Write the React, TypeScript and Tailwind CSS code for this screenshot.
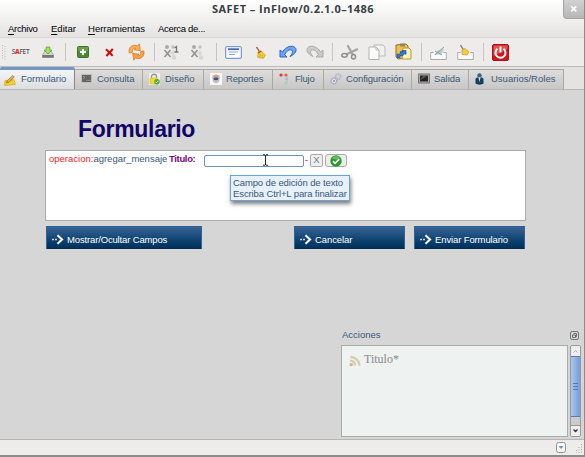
import React from "react";

type Kids = { children?: React.ReactNode };

function Svg({ w, h, box, children }: Kids & { w: number; h: number; box?: string }) {
  return (
    <svg width={w} height={h} viewBox={box ?? `0 0 ${w} ${h}`} className="block shrink-0" fill="none">
      {children}
    </svg>
  );
}

const Slot = ({ children }: Kids) => <div className="flex h-[29px] w-[27px] shrink-0 items-center justify-center">{children}</div>;
const Sep = () => (
  <div className="flex w-2 shrink-0 justify-center">
    <div className="h-[18px] w-px bg-[#c6c4c1]" />
  </div>
);

const Download = () => (
  <Svg w={12} h={12}>
    <path d="M2.5 5.5h7L11.5 9v2.5H.5V9z" fill="#d5d5d5" stroke="#909090" strokeWidth=".7" />
    <path d="M.5 9h11v2.5H.5z" fill="#777" />
    <path d="M4.2 1h3.6v3h2L6 8 2.2 4h2z" fill="#a5e45f" stroke="#52a329" strokeWidth=".8" />
  </Svg>
);
const Plus = () => (
  <Svg w={12} h={12}>
    <rect x=".5" y=".5" width="11" height="11" rx="1" fill="#4e8a36" stroke="#3d742c" />
    <path d="M1 1h10v4H1z" fill="#6b9e46" />
    <path d="M6 3v6M3 6h6" stroke="white" strokeWidth="2" />
  </Svg>
);
const Cross = () => (
  <Svg w={9} h={9}>
    <path d="M1 1.2l6.7 6.5M7.8 1L1.4 8" stroke="#d00a0a" strokeWidth="2" />
  </Svg>
);
const Refresh = () => (
  <Svg w={17} h={18}>
    <path d="M1.2 10C0 4 4.7 .8 9.7 3L11.2.8l1.2 6.9-6.4-1L8 5.4C5.3 4.5 3.8 6.4 4.5 9.2z" fill="#ffad58" stroke="#d97824" strokeWidth=".8" />
    <path d="M15.8 7.8c1.3 6-3.6 9.3-8.4 7.1L5.8 17.2l-1.2-6.9 6.4 1-2 1.3c2.7.9 4.2-1 3.5-3.8z" fill="#ffa046" stroke="#d97824" strokeWidth=".8" />
  </Svg>
);
const Node = ({ one }: { one?: boolean }) => (
  <Svg w={17} h={17}>
    <circle cx="4" cy="3" r="2" fill="#aaa" />
    <circle cx="10" cy="3" r="1.7" fill="#c1c1c1" />
    <path d="M1.5 6l6 7M7.5 6l-6 7" stroke="#929292" strokeWidth="1.6" />
    <path d="M10 6v6M7 9h5" stroke="#cecece" strokeWidth="1" />
    <circle cx="11" cy="13.5" r="2.3" fill="#d8d8d8" />
    {one && <path d="M11.5 4L13.5 2.5V8M11.5 8h4" stroke="#777" strokeWidth="1.3" />}
  </Svg>
);
const Lines = () => (
  <Svg w={17} h={13}>
    <rect x=".5" y=".5" width="16" height="12" rx="1.5" fill="#dce8f8" stroke="#7c9bca" />
    <rect x="2.5" y="2" width="12" height="9" fill="white" />
    <path d="M3 3.2h11" stroke="#416ba9" strokeWidth="1.8" />
    <path d="M4 6h9M4 8.5h6" stroke="#8ba7d0" />
  </Svg>
);
const Broom = () => (
  <Svg w={11} h={13}>
    <path d="M1.5.8l3 5" stroke="#b3643d" strokeWidth="1.4" />
    <path d="M3 6.5L6 5l4.5 4-2 3.3-5.8-.8z" fill="#f5cf38" stroke="#c69b20" strokeWidth=".7" />
    <path d="M3 7l3.3-2" stroke="#bc3d23" strokeWidth="1.2" />
    <path d="M5.5 8l-.8 3M7.5 8.5L7 12" stroke="#bf941d" strokeWidth=".6" />
  </Svg>
);
const Undo = ({ redo }: { redo?: boolean }) => (
  <Svg w={18} h={14}>
    <g transform={redo ? "translate(18 0) scale(-1 1)" : undefined}>
      <path d="M1 5v7h7L5.7 9.5C8 5 11.5 4 13 5.5s-.5 4-2 6C16.5 9 18.5 5 16 2.5S7 1 3.5 7z" fill={redo ? "#cacaca" : "#6da4f4"} stroke={redo ? "#ababab" : "#2e63c4"} />
    </g>
  </Svg>
);
const Scissors = () => (
  <Svg w={18} h={16}>
    <path d="M6.5 1.2L12 11M17 5L5 10.5" stroke="#a2a2a2" strokeWidth="2.1" />
    <ellipse cx="3.5" cy="11.3" rx="2.7" ry="1.9" stroke="#8f8f8f" strokeWidth="1.5" />
    <ellipse cx="12.5" cy="12.7" rx="2" ry="2.3" stroke="#8f8f8f" strokeWidth="1.5" />
  </Svg>
);
const Copy = () => (
  <Svg w={18} h={17}>
    <path d="M6 1h9l2 2v9H6z" fill="#f1f1f1" stroke="#bababa" />
    <path d="M1 3h7l3 3v9.5H1z" fill="#fafafa" stroke="#b1b1b1" />
    <path d="M8 3v3h3" stroke="#bbb" />
  </Svg>
);
const Paste = () => (
  <Svg w={17} h={18}>
    <path d="M1 2l10-1 2 2v12l-10 1-2-2z" fill="#f0c04d" stroke="#8d6f28" />
    <path d="M5 .5h5v3H5z" fill="#8f8468" />
    <path d="M8 5h6l2 2v9H7z" fill="#fff3bd" stroke="#b59448" />
    <path d="M2 14.5v-3.3h3.3V8.6h2.6L7 7.6h4v3.8l-1.2-1-2 2.3H5v1.8z" fill="#317cd7" stroke="#174c96" strokeWidth=".7" />
  </Svg>
);
const Tray = ({ broom }: { broom?: boolean }) => (
  <Svg w={17} h={17}>
    <path d="M.7 8.5V15.5h15.6V8.5h-3M.7 8.5h3" fill="#fafafa" stroke="#adadad" />
    {broom ? (
      <g>
        <path d="M3.5 1l3 5" stroke="#a66c44" strokeWidth="1.4" />
        <path d="M5 6l3-1.5 4 3.5-2 3-5-.5z" fill="#f4cc3d" stroke="#c7972b" strokeWidth=".7" />
      </g>
    ) : (
      <g>
        <path d="M4 10.5l4-4 6-2-2.5 6z" fill="#b9d0cd" />
        <path d="M5 11l9-8M5 7l7 4" stroke="#81a6a5" />
      </g>
    )}
  </Svg>
);
const Power = () => (
  <Svg w={17} h={17}>
    <rect x=".5" y=".5" width="16" height="16" rx="1.5" fill="#cb171f" stroke="#b60d16" />
    <path d="M1.5 1.5h14V5l-14 7z" fill="#e25252" />
    <path d="M5.5 4.8a5 5 0 1 0 6 0M8.5 2.5v6" stroke="white" strokeWidth="1.9" />
  </Svg>
);

const Pencil = () => (
  <Svg w={12} h={12}>
    <path d="M1 6.5l9-.8 1.3 4.8-10.7 1z" fill="#f6cf26" stroke="#d7aa22" strokeWidth=".7" />
    <path d="M3 7l5.8-5.5L10.3 3 4.5 8.5l-2 .3z" fill="#edb62e" stroke="#8b6c2b" strokeWidth=".7" />
  </Svg>
);
const Terminal = () => (
  <Svg w={11} h={11}>
    <path d="M.5 1.5h10v8H.5z" fill="#666" stroke="#bcbcbc" />
    <path d="M2 3l2 1.5L2 6" stroke="#a2a2a2" strokeWidth=".7" />
    <path d="M5 7.5h5" stroke="#898989" />
  </Svg>
);
const Lock = () => (
  <Svg w={11} h={12}>
    <path d="M0 0h11v12H0z" fill="#eeeeec" />
    <path d="M2.5 6V3.5c0-3 5-3 5 0V6" stroke="#999" strokeWidth="1.4" />
    <rect x="1" y="5" width="7.5" height="6" rx=".7" fill="#f3dc29" stroke="#d0b920" strokeWidth=".6" />
    <circle cx="8" cy="8.7" r="2.8" fill="#51a842" />
    <path d="M6.5 8.8l1 1 2-2" stroke="white" />
  </Svg>
);
const Report = () => (
  <Svg w={12} h={12}>
    <path d="M0 0h12v12H0z" fill="#f7f7f7" />
    <path d="M2 4l4-2 4 2-1 5-3 1.5L3 9z" fill="#c4bfca" />
    <path d="M2 3l4-1.5L10 3 6 5z" fill="#d3a568" />
    <ellipse cx="6" cy="5.8" rx="2.6" ry="1.5" fill="#44548a" />
  </Svg>
);
const Flow = () => (
  <Svg w={10} h={12}>
    <path d="M3 2h5v8" stroke="#bbb" />
    <circle cx="2" cy="2" r="1.6" fill="#ed3135" />
    <circle cx="7" cy="2" r="1.5" fill="#f15a34" />
    <circle cx="7.5" cy="6" r="1.3" fill="#a8b8db" />
    <circle cx="7" cy="10" r="1.6" fill="#9bdba3" />
  </Svg>
);
const Gears = () => (
  <Svg w={12} h={12}>
    <circle cx="8" cy="3.7" r="2.6" stroke="#b4b6cc" strokeWidth="2" strokeDasharray="1.4 .6" />
    <circle cx="4" cy="8" r="2.8" fill="#e8e8f2" stroke="#a7a9c3" strokeWidth="1.7" strokeDasharray="1.5 .5" />
    <circle cx="4" cy="8" r="1" fill="#888ba8" />
  </Svg>
);
const Screen = () => (
  <Svg w={12} h={11}>
    <rect x=".5" y="1" width="11" height="9" fill="#aaa" stroke="#777" />
    <rect x="2" y="2.5" width="8" height="6" fill="#252525" />
    <path d="M2 7l3-4h4z" fill="#5a5a5a" />
  </Svg>
);
const Person = () => (
  <Svg w={9} h={12}>
    <circle cx="4.5" cy="2.5" r="2.2" fill="#326488" />
    <path d="M.5 6c0-2.2 8-2.2 8 0v4.5C7 12 2 12 .5 10.5z" fill="#123f65" />
    <path d="M3.3 4.3h2.4L4.5 9z" fill="#d7e6f0" />
  </Svg>
);

function Tab({ icon, text, box, label }: { icon: React.ReactNode; text: string; box: string; label: string }) {
  return (
    <div className={`flex h-[20px] shrink-0 items-center border-t border-r border-[#aaa8a5] bg-linear-to-b from-[#dedddb] to-[#c9c7c5] ${box}`}>
      <div className="flex w-[22px] shrink-0 items-center pb-[2px] pl-[6px]">{icon}</div>
      <span className={`whitespace-nowrap pb-[2px] text-[9.5px] leading-[14px] ${label}`}>{text}</span>
    </div>
  );
}

function ActionButton({ children, size, text }: Kids & { size: string; text: string }) {
  return (
    <button className={`flex h-[23px] items-center rounded-[1px] border border-[#355f8c] border-b-[#002c54] bg-linear-to-b from-[#376497] via-[#124674] via-55% to-[#00315b] pl-[5px] text-white ${size}`}>
      <div className="pt-[3px]">
        <Svg w={12} h={11}>
          <path d="M0 5.5h2M3 5.5h2" stroke="#c9d4df" strokeWidth="1.5" />
          <path d="M5.5 1.2l4.6 4.3-4.6 4.3" stroke="#fffdf0" strokeWidth="2" />
        </Svg>
      </div>
      <span className={`ml-[3px] whitespace-nowrap pt-[4px] text-[9.5px] leading-[14px] ${text}`}>{children}</span>
    </button>
  );
}

export default function App() {
  return (
    <div className="flex h-[457px] w-[585px] flex-col overflow-hidden border-r border-b-2 border-[#8d8d8d] bg-[#d6d6d6] font-['Liberation_Sans',Arial,sans-serif] text-[#36597a]">
      <header className="relative h-[37px] shrink-0 bg-linear-to-b from-white to-[#e4e3e1] text-[#292929]">
        <h1 className="h-[21px] pt-[2px] pl-[212px] font-['Open_Sans','Noto_Sans',sans-serif] text-[11px] leading-[14px] font-bold tracking-[0.46px] text-[#384044]">SAFET – InFlow/0.2.1.0–1486</h1>
        <nav className="flex pl-[8px] text-[9.5px] leading-[16px] text-black">
          <span className="w-[43px] tracking-[-0.3px]"><u className="underline-offset-2">A</u>rchivo</span>
          <span className="w-[37px]"><u className="underline-offset-2">E</u>ditar</span>
          <span className="w-[70px]"><u className="underline-offset-2">H</u>erramientas</span>
          <span className="tracking-[-0.3px]">Acerca de...</span>
        </nav>
        <div className="absolute top-0 right-0 flex h-[19px] w-[21px] items-center justify-center rounded-bl-[4px] border-b border-l border-[#a4a4a4] bg-linear-to-b from-[#d1d1d1] to-[#b7b7b7]">
          <Svg w={8} h={8}><path d="M1.3 1.3l5 5M6.3 1.3l-5 5" stroke="white" strokeWidth="1.8" /></Svg>
        </div>
      </header>

      <div className="flex h-[30px] shrink-0 items-center border-t border-b border-t-[#dad8d6] border-b-[#bdbbb9] bg-[#edeceb]">
        <div className="flex w-[7px] shrink-0 pl-[2px]">
          <Svg w={4} h={15}><path d="M.5 0v15M3 1v14" stroke="#bbb" strokeDasharray="1 1.5" /></Svg>
        </div>
        <Slot><span className="font-['Open_Sans'] text-[6.5px] leading-[8px] font-semibold tracking-[-0.3px] text-[#555]">S<b className="text-[#dc3434]">A</b>FET</span></Slot>
        <Slot><Download /></Slot>
        <Sep />
        <Slot><Plus /></Slot>
        <Slot><Cross /></Slot>
        <Slot><Refresh /></Slot>
        <Sep />
        <Slot><Node one /></Slot>
        <Slot><Node /></Slot>
        <Sep />
        <Slot><Lines /></Slot>
        <Slot><Broom /></Slot>
        <Slot><Undo /></Slot>
        <Slot><Undo redo /></Slot>
        <Sep />
        <Slot><Scissors /></Slot>
        <Slot><Copy /></Slot>
        <Slot><Paste /></Slot>
        <Sep />
        <Slot><Tray /></Slot>
        <Slot><Tray broom /></Slot>
        <Sep />
        <Slot><Power /></Slot>
      </div>

      <div className="flex h-[22px] shrink-0 items-end bg-[#e4e3e1]">
        <div className="flex h-[22px] w-[75px] shrink-0 items-center rounded-t-[2px] border-t-[3px] border-r border-t-[#7697c6] border-r-[#888] bg-linear-to-b from-[#f2f5f9] to-[#dedede] pl-[4px]">
          <Pencil />
          <span className="ml-[5px] pb-[2px] text-[9.5px] leading-[14px]">Formulario</span>
        </div>
        <Tab icon={<Terminal />} text="Consulta" box="w-[68px]" label="" />
        <Tab icon={<Lock />} text="Diseño" box="w-[61px]" label="" />
        <Tab icon={<Report />} text="Reportes" box="w-[69px]" label="tracking-[-0.15px]" />
        <Tab icon={<Flow />} text="Flujo" box="w-[51px]" label="tracking-[-0.2px]" />
        <Tab icon={<Gears />} text="Configuración" box="w-[88px]" label="tracking-[-0.1px]" />
        <Tab icon={<Screen />} text="Salida" box="w-[57px]" label="" />
        <Tab icon={<Person />} text="Usuarios/Roles" box="w-[95px]" label="" />
      </div>

      <main className="flex min-h-0 flex-1 flex-col border-t border-[#b5b5b5]">
        <h2 className="mt-[25px] ml-[78px] text-[23px] leading-[28px] font-bold tracking-[-0.3px] text-[#110568]">Formulario</h2>
        <section className="mt-[7px] ml-[45px] h-[71px] w-[481px] shrink-0 border border-[#aaa] bg-white text-[9.5px]">
          <div className="flex h-[19px] items-center pl-[3px] whitespace-nowrap">
            <span className="w-[120px] pb-[3px]"><span className="text-[#f12424]">operacion:</span>agregar_mensaje</span>
            <b className="w-[35px] pb-[3px] tracking-[-0.35px] text-[#7b087b]">Titulo:</b>
            <div className="relative h-[12px] w-[100px] rounded-[2px] border border-[#6f8fbd] bg-white">
              <div className="absolute top-[-2px] left-[57px]">
                <Svg w={7} h={12}><path d="M1 .8h2l.5.7.5-.7h2M3.5 1v10M1 11.2h2l.5-.7.5.7h2" stroke="#222" /></Svg>
              </div>
              <div className="absolute top-[19px] left-[25px] h-[26px] w-[120px] border border-[#68a5d4] bg-[#e8f1fa] pt-[1px] pl-[2px] leading-[11px] shadow-[1px_3px_4px_rgba(0,0,0,0.5)]">
                <div className="tracking-[-0.12px]">Campo de edición de texto</div>
                <div className="tracking-[-0.1px]">Escriba Ctrl+L para finalizar</div>
              </div>
            </div>
            <span className="w-[6px] pl-[1px] text-red-600">-</span>
            <div className="flex h-[13px] w-[13px] items-center justify-center rounded-[2px] border border-[#aaa] bg-[#eee] text-[#6c8294]">X</div>
            <div className="ml-[2px] flex h-[13px] w-[22px] items-center justify-center rounded-[3px] border border-[#aaa] bg-[#eee]">
              <Svg w={12} h={12}><circle cx="6" cy="6" r="5.7" fill="#269c27" /><path d="M2 3.5C4-.2 8-.2 10 3.2 7 5 5 5 2 3.5z" fill="#65bf56" /><path d="M3 6.2l2.1 2.2 4.2-4.3" stroke="white" strokeWidth="1.7" /></Svg>
            </div>
          </div>
        </section>
        <div className="mt-[5px] flex pl-[46px]">
          <ActionButton size="w-[156px]" text="tracking-[-0.15px]">Mostrar/Ocultar Campos</ActionButton>
          <ActionButton size="ml-[92px] w-[111px]" text="tracking-[-0.1px]">Cancelar</ActionButton>
          <ActionButton size="ml-[9px] w-[111px]" text="tracking-[-0.12px]">Enviar Formulario</ActionButton>
        </div>
        <aside className="mt-[78px] ml-[341px] w-[242px]">
          <div className="flex h-[18px] items-start justify-between pr-[4px] pl-[1px]">
            <span className="text-[9.5px] leading-[16px]">Acciones</span>
            <div className="pt-[4px]">
              <Svg w={9} h={9}><rect x=".5" y=".5" width="8" height="8" rx="1.5" stroke="#777" /><path d="M3.5 2.5h3v3h-1M2.5 4h3v2.5h-3z" stroke="#555" strokeWidth=".8" /></Svg>
            </div>
          </div>
          <div className="flex">
            <div className="flex h-[92px] w-[227px] border border-[#aaa] bg-[#eef3f1] pt-[9px] pl-[7px]">
              <Svg w={12} h={12}><circle cx="2.2" cy="9.8" r="1.8" fill="#cebb8b" /><path d="M1 5.6c3 0 5 2 5 5M1.5 2c5 0 9 4 9 8.7" stroke="#d9ccaa" strokeWidth="2.3" /></Svg>
              <span className="mt-[-3px] ml-[3px] font-['Liberation_Serif',serif] text-[12px] leading-[15px] text-[#888]">Titulo*</span>
            </div>
            <div className="ml-[2px] flex h-[92px] w-[11px] flex-col overflow-hidden rounded-[2px] border border-[#999] bg-[#cbcbcb]">
              <div className="flex h-[10px] items-center justify-center bg-[#eee]"><Svg w={5} h={3}><path d="M.5 2.5l2-2 2 2" stroke="#aaa" /></Svg></div>
              <div className="flex h-[61px] items-center justify-center border-y border-[#547eb8] bg-linear-to-r from-[#abc8ed] to-[#719ed8]"><Svg w={5} h={7}><path d="M0 .5h5M0 3.5h5M0 6.5h5" stroke="#527cae" /></Svg></div>
              <div className="mt-auto flex h-[11px] items-center justify-center border-t border-[#999] bg-[#eee]"><Svg w={5} h={4}><path d="M.5 .5l2 2 2-2" stroke="#333" strokeWidth="1.3" /></Svg></div>
            </div>
          </div>
        </aside>
      </main>
      <footer className="flex h-[16px] shrink-0 items-center justify-end gap-[8px] border-t border-[#b5b5b5] bg-[#edeceb] pr-[1px]">
        <Svg w={10} h={11}><rect x=".5" y=".5" width="9" height="10" rx="2" fill="#f7f7f7" stroke="#929292" /><path d="M3 4h4v1L5 7 3 5z" fill="#719bd3" /></Svg>
        <Svg w={9} h={10}><path d="M7.5 1v9M5 4v6M2.5 7v3" stroke="#aaa" strokeDasharray="1 1.5" /></Svg>
      </footer>
    </div>
  );
}
